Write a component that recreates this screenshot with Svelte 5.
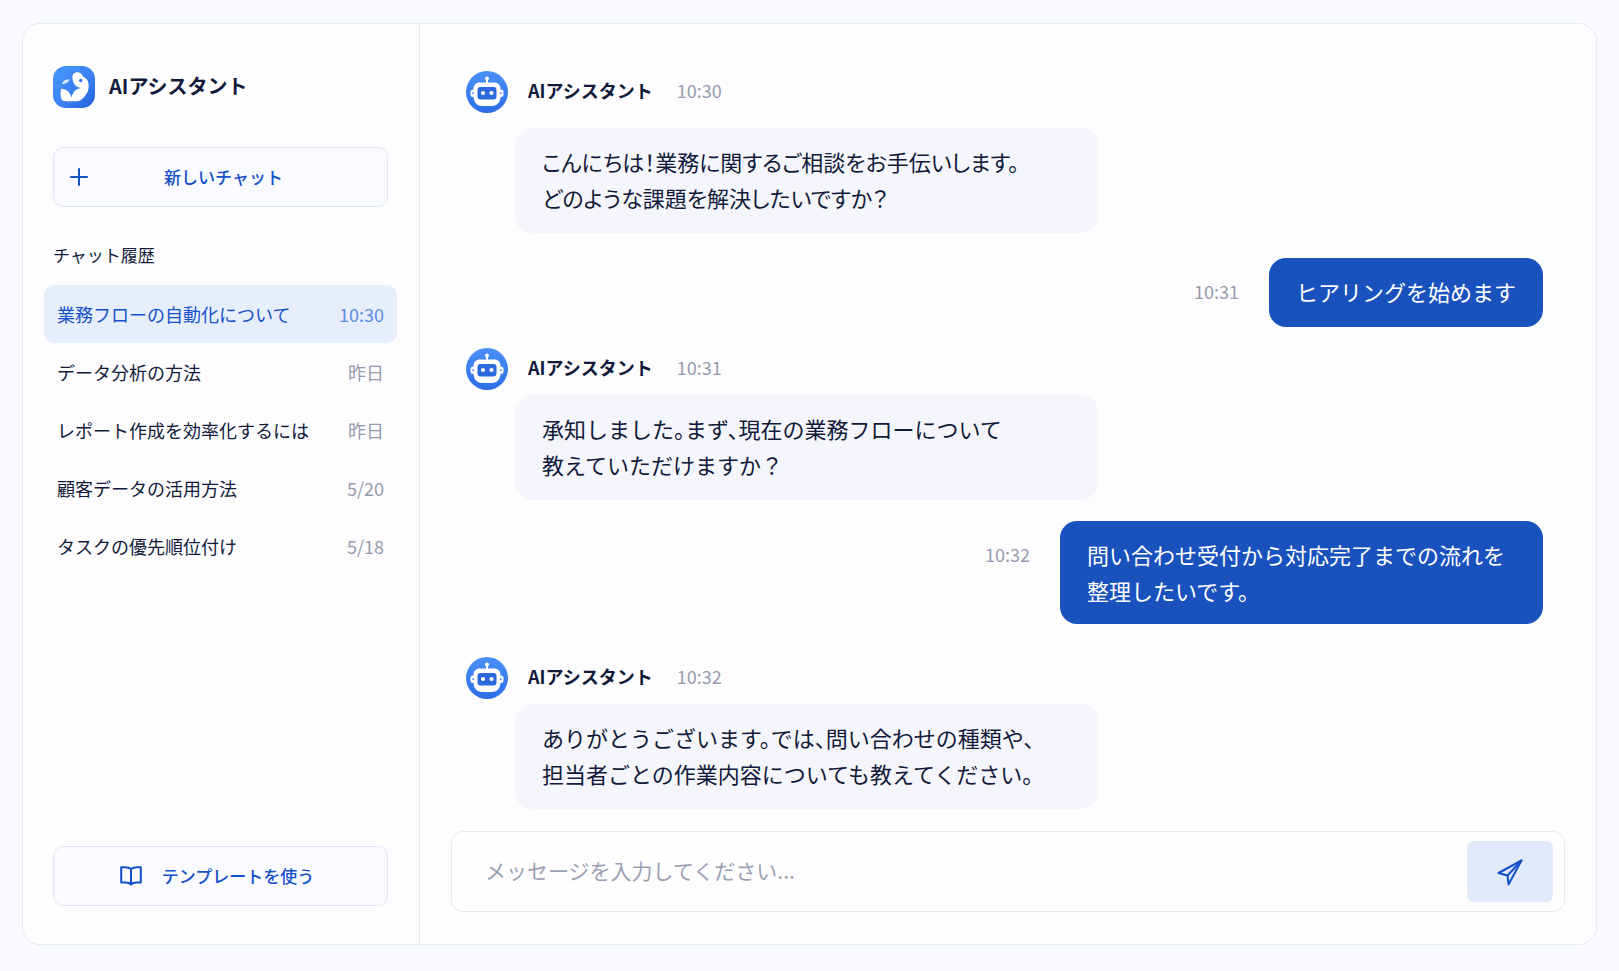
<script lang="ts">
	type Spacing = 'sm' | 'md' | 'lg';

	interface HistoryItem {
		title: string;
		when: string;
	}

	interface Message {
		from: 'bot' | 'user';
		time: string;
		lines: string[];
		spacing?: Spacing;
		intro?: boolean;
	}

	const history: HistoryItem[] = [
		{ title: '業務フローの自動化について', when: '10:30' },
		{ title: 'データ分析の方法', when: '昨日' },
		{ title: 'レポート作成を効率化するには', when: '昨日' },
		{ title: '顧客データの活用方法', when: '5/20' },
		{ title: 'タスクの優先順位付け', when: '5/18' }
	];

	const messages: Message[] = [
		{
			from: 'bot',
			time: '10:30',
			lines: ['こんにちは！業務に関するご相談をお手伝いします。', 'どのような課題を解決したいですか？'],
			intro: true
		},
		{ from: 'user', time: '10:31', lines: ['ヒアリングを始めます'], spacing: 'md' },
		{
			from: 'bot',
			time: '10:31',
			lines: ['承知しました。まず、現在の業務フローについて', '教えていただけますか？'],
			spacing: 'sm'
		},
		{
			from: 'user',
			time: '10:32',
			lines: ['問い合わせ受付から対応完了までの流れを', '整理したいです。'],
			spacing: 'sm'
		},
		{
			from: 'bot',
			time: '10:32',
			lines: ['ありがとうございます。では、問い合わせの種類や、', '担当者ごとの作業内容についても教えてください。'],
			spacing: 'lg'
		}
	];

	let selected = $state(0);
	let draft = $state('');
</script>

{#snippet robot()}
	<svg class="avatar" viewBox="0 0 42 42" aria-hidden="true">
		<defs>
			<linearGradient id="avatar-bg" x1="0" y1="0" x2="0" y2="1">
				<stop offset="0" stop-color="#4a90f8" />
				<stop offset="1" stop-color="#2c6de6" />
			</linearGradient>
		</defs>
		<circle cx="21" cy="21" r="21" fill="url(#avatar-bg)" />
		<circle cx="21" cy="7.5" r="2" fill="#fff" />
		<path d="M21 8v5" stroke="#fff" stroke-width="2" />
		<rect x="4.5" y="18.5" width="5" height="7.5" rx="2.5" fill="#fff" />
		<rect x="32.5" y="18.5" width="5" height="7.5" rx="2.5" fill="#fff" />
		<path
			d="M14 11.5h14c4 0 6.5 2.6 6.5 6.5v7.5c0 5.5-3.5 9.5-8.5 9.5H16c-5 0-8.5-4-8.5-9.5V18c0-3.9 2.5-6.5 6.5-6.5z"
			fill="#fff"
		/>
		<rect x="11.5" y="16" width="19" height="12.5" rx="3" fill="#2a68dc" />
		<circle cx="17" cy="22" r="2.1" fill="#fff" />
		<circle cx="25.5" cy="22" r="2.1" fill="#fff" />
		<circle cx="7.2" cy="22.2" r="0.9" fill="#4383ee" />
		<circle cx="34.8" cy="22.2" r="0.9" fill="#4383ee" />
	</svg>
{/snippet}

<div class="window">
	<aside class="sidebar">
		<header class="brand">
			<svg class="brand__logo" viewBox="0 0 42 42" aria-hidden="true">
				<defs>
					<linearGradient id="logo-bg" x1="0" y1="0" x2="1" y2="1">
						<stop offset="0" stop-color="#4797fb" />
						<stop offset="0.5" stop-color="#3d84f3" />
						<stop offset="1" stop-color="#2460dc" />
					</linearGradient>
				</defs>
				<rect width="42" height="42" rx="13" fill="url(#logo-bg)" />
				<path
					d="M19.5 12c-.5-3.5 2-5.7 4.8-5.7 2.9 0 4.7 1.5 5.7 4.2 3.7 1.5 5.7 4.7 5.7 9.5 0 4-1.2 7-3.5 9.5-2 3-4.7 5.7-8.2 5.7H12.5C9.5 35.2 8 33.5 7.8 31c-.3-3-.3-5.5 0-6.7.3-1.3 1-1.7 2.2-1.4 4.5.9 7 3.2 8.5 8.4 1.3-5.3 4-8.1 8.5-9.3-4.5-1-7-4.5-7.5-10z"
					fill="#fff"
				/>
				<path
					d="M18.5 13.5c1 5 3.5 7.5 9 8.5-5.5 1.2-8 4-9 9.3-1.5-5.3-4-8.3-8.5-9.3 5-1 7.5-3.5 8.5-8.5z"
					fill="#3a80f1"
				/>
				<path d="M9.2 18c.6-3 3-4.7 7.3-4.8-.5 2.6-3 4.6-7.3 4.8z" fill="#d9e8ff" />
				<circle cx="27.7" cy="14.5" r="1.7" fill="#3577ea" />
			</svg>
			<h1 class="brand__name">AIアシスタント</h1>
		</header>

		<button class="btn btn--new" type="button">
			<svg class="btn__plus" viewBox="0 0 18 18" aria-hidden="true">
				<path d="M9 1v16M1 9h16" />
			</svg>
			<span>新しいチャット</span>
		</button>

		<h2 class="sidebar__label">チャット履歴</h2>
		<ul class="history">
			{#each history as item, i}
				<li>
					<button
						class="history__item"
						class:history__item--active={selected === i}
						type="button"
						aria-current={selected === i}
						onclick={() => (selected = i)}
					>
						<span>{item.title}</span>
						<span class="history__when">{item.when}</span>
					</button>
				</li>
			{/each}
		</ul>

		<button class="btn btn--template" type="button">
			<svg class="btn__book" viewBox="0 0 22 20" aria-hidden="true">
				<path
					d="M11 3C9.5 1.6 7.5 1.2 5 1.2H1.2v15.3H5.5c2.5 0 4.2.5 5.5 2 1.3-1.5 3-2 5.5-2h4.3V1.2H17c-2.5 0-4.5.4-6 1.8zM11 3v15.5"
				/>
			</svg>
			<span>テンプレートを使う</span>
		</button>
	</aside>

	<main class="chat">
		<div class="thread">
			{#each messages as message}
				{#if message.from === 'bot'}
					<article class="message message--{message.spacing}" class:message--intro={message.intro}>
						<header class="message__header">
							{@render robot()}
							<h3 class="message__author">AIアシスタント</h3>
							<time class="message__time">{message.time}</time>
						</header>
						<p class="bubble">
							{#each message.lines as line}<span>{line}</span>{/each}
						</p>
					</article>
				{:else}
					<article class="message message--user message--{message.spacing}">
						<time class="message__time">{message.time}</time>
						<p class="bubble bubble--user" class:bubble--multiline={message.lines.length > 1}>
							{#each message.lines as line}<span>{line}</span>{/each}
						</p>
					</article>
				{/if}
			{/each}
		</div>

		<form class="composer" onsubmit={(e) => e.preventDefault()}>
			<input
				class="composer__input"
				type="text"
				aria-label="メッセージ"
				placeholder="メッセージを入力してください..."
				bind:value={draft}
			/>
			<button class="composer__send" type="submit" aria-label="送信">
				<svg viewBox="0 0 28 28" aria-hidden="true">
					<path d="M25.5 2.5L2.5 15l9 2.5L12.5 26.5z" />
					<path d="M25.5 2.5L11.5 17.5" />
				</svg>
			</button>
		</form>
	</main>
</div>

<style>
	:global(body) {
		background: #f9fafd;
	}

	.window {
		--ink: #111a3a;
		--blue: #1450c8;
		--muted: #959bae;
		--line: #e4e9f4;

		display: flex;
		box-sizing: border-box;
		min-height: calc(100vh - 49px);
		margin: 23px 22px 26px;
		overflow: hidden;
		border: 1px solid var(--line);
		border-radius: 18px;
		background: #fdfdfe;
		color: var(--ink);
		font-family: 'Noto Sans CJK JP', sans-serif;
		font-size: 18px;
		line-height: 26px;
	}

	button,
	input {
		font: inherit;
		color: inherit;
	}

	button {
		cursor: pointer;
	}

	svg {
		display: block;
		flex: none;
	}

	h1,
	h2,
	h3,
	p,
	ul {
		margin: 0;
		padding: 0;
	}

	/* Sidebar */
	.sidebar {
		display: flex;
		flex: none;
		flex-direction: column;
		box-sizing: border-box;
		width: 397px;
		padding: 42px 31px 38px 30px;
		border-right: 1px solid var(--line);
	}

	.brand {
		display: flex;
		align-items: center;
		gap: 14px;
		margin-bottom: 39px;
	}

	.brand__logo,
	.avatar {
		width: 42px;
		height: 42px;
	}

	.brand__name {
		padding-bottom: 2px;
		font-size: 20px;
		font-weight: 700;
		line-height: 32px;
	}

	.btn {
		display: flex;
		align-items: center;
		justify-content: center;
		height: 60px;
		padding: 0 16px;
		border: 1px solid #dfe6f5;
		border-radius: 10px;
		background: #fafbfe;
		color: var(--blue);
		font-size: 17px;
		font-weight: 500;
	}

	.btn span {
		padding-bottom: 1px;
	}

	.btn svg,
	.composer__send svg {
		fill: none;
		stroke: currentColor;
		stroke-width: 2;
		stroke-linecap: round;
		stroke-linejoin: round;
	}

	.btn--new {
		display: grid;
		grid-template-columns: 18px 1fr 12px;
	}

	.btn__plus {
		width: 18px;
		height: 18px;
	}

	.btn--template {
		gap: 20px;
		margin-top: auto;
		padding-right: 23px;
	}

	.btn__book {
		width: 22px;
		height: 20px;
	}

	.sidebar__label {
		margin: 35px 0 17px;
		font-size: 17px;
		font-weight: 400;
	}

	.history {
		margin: 0 -9px;
		list-style: none;
	}

	.history__item {
		display: flex;
		align-items: center;
		justify-content: space-between;
		width: 100%;
		height: 58px;
		padding: 0 13px;
		border: 0;
		border-radius: 10px;
		background: none;
		text-align: left;
	}

	.history__when {
		color: var(--muted);
	}

	.history__item--active {
		background: #e7eefb;
		color: var(--blue);
	}

	.history__item--active .history__when {
		color: #5b8be6;
	}

	/* Conversation */
	.chat {
		display: flex;
		flex: 1;
		flex-direction: column;
		justify-content: space-between;
		min-width: 0;
		padding: 47px 31px 32px;
	}

	.thread {
		padding: 0 22px 19px 15px;
	}

	.message__header {
		display: flex;
		align-items: center;
		margin-bottom: 5px;
	}

	.message--intro .message__header {
		margin-bottom: 15px;
	}

	.message--sm {
		margin-top: 21px;
	}

	.message--md {
		margin-top: 25px;
	}

	.message--lg {
		margin-top: 33px;
	}

	.message--user {
		display: flex;
		align-items: flex-start;
		justify-content: flex-end;
		gap: 30px;
	}

	.message--user .message__time {
		padding-top: 20px;
	}

	.message__author {
		margin: 0 24px 0 20px;
		padding-bottom: 4px;
		font-size: 18px;
		font-weight: 700;
	}

	.message__time {
		padding-bottom: 4px;
		color: var(--muted);
	}

	.bubble {
		box-sizing: border-box;
		max-width: 583px;
		margin-left: 49px;
		padding: 15px 27px 18px;
		border-radius: 17px;
		background: #f5f6fb;
		font-size: 22px;
		font-feature-settings: 'halt';
		line-height: 36px;
	}

	.message--intro .bubble {
		font-feature-settings: 'palt';
	}

	.bubble span {
		display: block;
	}

	.bubble--user {
		margin-left: 0;
		background: #1a52bd;
		color: #fff;
	}

	.bubble--multiline {
		padding-right: 38px;
		padding-bottom: 16px;
	}

	/* Composer */
	.composer {
		display: flex;
		align-items: center;
		box-sizing: border-box;
		height: 81px;
		padding: 0 11px 0 33px;
		border: 1px solid var(--line);
		border-radius: 12px;
		background: #fefeff;
	}

	.composer__input {
		flex: 1;
		min-width: 0;
		padding: 0 0 4px;
		border: 0;
		outline: 0;
		background: none;
		font-size: 21px;
		line-height: 36px;
	}

	.composer__input::placeholder {
		color: #9ba1b3;
		opacity: 1;
	}

	.composer__send {
		display: flex;
		align-items: center;
		justify-content: center;
		width: 86px;
		height: 61px;
		border: 0;
		border-radius: 7px;
		background: #e1eafa;
		color: var(--blue);
	}

	.composer__send svg {
		width: 28px;
		height: 28px;
	}
</style>
